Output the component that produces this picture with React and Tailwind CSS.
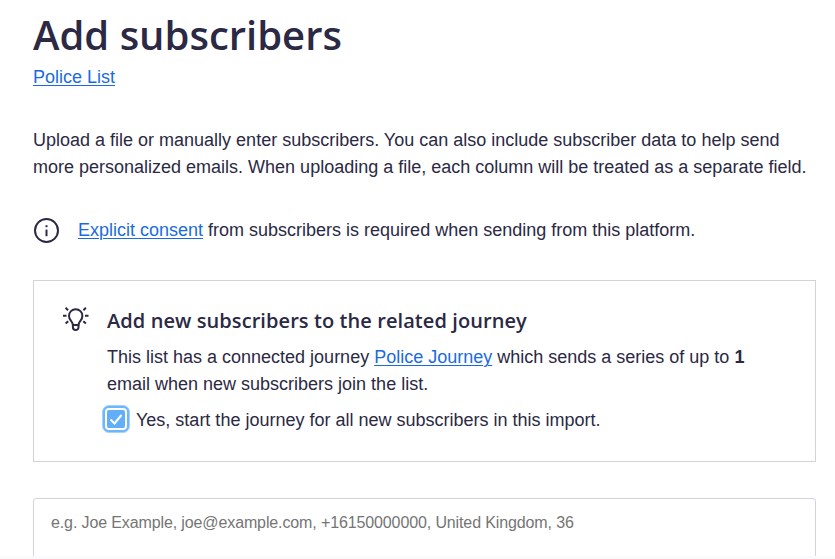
import React from "react";

const link = "text-[#1a6be0] underline decoration-1 underline-offset-[2px]";

function InfoIcon() {
  return (
    <svg className="mt-[12px] h-[27px] w-[27px] shrink-0" viewBox="0 0 27 27" fill="none" stroke="#2b2944">
      <circle cx="13.5" cy="12.5" r="11.5" strokeWidth="2" />
      <path d="M13.5 11.6v6.6" strokeWidth="2" />
      <path d="M13.5 7.200v2" strokeWidth="2" />
    </svg>
  );
}

function BulbIcon() {
  return (
    <svg className="mt-px ml-px block h-[26px] w-[26px]" viewBox="0 0 26 26" fill="none" stroke="#2b2944" strokeWidth="2">
      <path d="M9.8 18c0-3.800-3.800-4.500-3.800-9.100a6.700 6.700 0 0 1 13.400 0c0 4.600-3.800 5.300-3.800 9.100z" strokeLinejoin="round" />
      <path d="M9.900 18v2.300a2.800 2.800 0 0 0 5.600 0V18" strokeWidth="2" />
      <path d="M0 8.800h3.500M22 8.800h3.500M2.600.8l2.500 2.400M22.900.8l-2.500 2.400M2.600 16.600l2.600-2.300M22.900 16.600l-2.600-2.300" />
    </svg>
  );
}

function Checkbox() {
  return (
    <span
      role="checkbox"
      aria-checked="true"
      className="-mt-[3px] flex h-[28px] w-[28px] shrink-0 items-center justify-center rounded-[7px] border border-[#a5d2fb] bg-[#6fb6f8]"
    >
      <span className="flex h-[22px] w-[22px] items-center justify-center rounded-[4px] bg-white">
        <span className="flex h-[18px] w-[18px] items-center justify-center rounded-[2px] bg-[#62aff8]">
          <svg className="h-[12px] w-[14px]" viewBox="0 0 14 12" fill="none" stroke="white" strokeWidth="2">
            <path d="M1.500 6.500l4 4L12.500 2" />
          </svg>
        </span>
      </span>
    </span>
  );
}

export default function App() {
  return (
    <main className="flex h-[559px] flex-col overflow-hidden bg-white font-['Liberation_Sans',Arial,sans-serif] text-[18px] leading-[27px] text-[#2b2944]">
      <div className="flex h-[556px] shrink-0 flex-col overflow-hidden pr-[19px] pl-[33px]">
        <h1 className="h-[64px] shrink-0 pt-[5px] font-['Open_Sans',sans-serif] text-[40px] leading-[60px] font-semibold whitespace-nowrap">
          Add subscribers
        </h1>
        <div className="shrink-0">
          <a className={link}>Police List</a>
        </div>
        <p className="mt-[36px] shrink-0 whitespace-nowrap">
          Upload a file or manually enter subscribers. You can also include subscriber data to help send
          <br />
          more personalized emails. When uploading a file, each column will be treated as a separate field.
        </p>
        <div className="mt-[25px] flex h-[74px] shrink-0 gap-[18px]">
          <InfoIcon />
          <p className="pt-[11px] whitespace-nowrap">
            <a className={link}>Explicit consent</a> from subscribers is required when sending from this platform.
          </p>
        </div>
        <section className="flex h-[182px] shrink-0 border border-[#d2d1de] pt-[25px] pl-[28px]">
          <div className="w-[45px] shrink-0">
            <BulbIcon />
          </div>
          <div className="whitespace-nowrap">
            <h2 className="font-['Open_Sans',sans-serif] text-[20px] leading-[30px] font-semibold tracking-[0.08px]">
              Add new subscribers to the related journey
            </h2>
            <p className="mt-[8px]">
              This list has a connected journey <a className={link}>Police Journey</a> which sends a series of up to{" "}
              <b>1</b>
              <br />
              email when new subscribers join the list.
            </p>
            <label className="mt-[9px] -ml-[5px] flex h-[27px] items-center gap-[6px]">
              <Checkbox />
              Yes, start the journey for all new subscribers in this import.
            </label>
          </div>
        </section>
        <textarea
          className="mt-[36px] block h-[120px] w-full shrink-0 resize-none rounded-[3px] border border-[#d2d3e0] px-[17px] py-[12px] text-[16px] leading-[24px] tracking-[-0.12px] placeholder:text-[#757575] placeholder:opacity-100"
          placeholder="e.g. Joe Example, joe@example.com, +16150000000, United Kingdom, 36"
        />
      </div>
      <div className="h-[3px] shrink-0 bg-[#fafafb]" />
    </main>
  );
}
